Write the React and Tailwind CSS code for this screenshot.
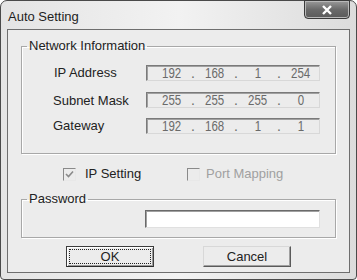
const font = { fontFamily: '"Liberation Sans", Arial, sans-serif' };

const Octet = ({ v }) => (
  <span className="w-[37px] flex justify-center">
    <span className="inline-block scale-x-[0.82]">{v}</span>
  </span>
);

const Dot = () => <span className="w-[6px] text-center">.</span>;

const IpField = ({ parts }) => (
  <div className="flex items-center w-[174px] h-[16px] pl-[6px] bg-[#ececec] border border-t-[#7a7a7a] border-l-[#7a7a7a] border-b-[#d8d8d8] border-r-[#d8d8d8] shadow-[inset_1px_1px_0_#a0a0a0] text-[14px] text-[#6a6a6a] leading-none">
    <Octet v={parts[0]} />
    <Dot />
    <Octet v={parts[1]} />
    <Dot />
    <Octet v={parts[2]} />
    <Dot />
    <Octet v={parts[3]} />
  </div>
);

const Checkbox = ({ checked, disabled, label, gap }) => (
  <label className={`flex items-center ${gap}`}>
    <span className="w-[13px] h-[13px] border border-t-[#8a8a8a] border-l-[#8a8a8a] border-b-[#e8e8e8] border-r-[#e8e8e8] bg-[#ececec] flex items-center justify-center">
      {checked && (
        <svg width="9" height="9" viewBox="0 0 9 9">
          <path d="M1 4 L3.5 6.5 L8 1.5" stroke="#8a8a8a" strokeWidth="1.6" fill="none" />
        </svg>
      )}
    </span>
    <span className={`text-[13px] ${disabled ? "text-[#a0a0a0]" : "text-[#222]"}`}>{label}</span>
  </label>
);

export default function App() {
  return (
    <div className="w-[357px] h-[280px] bg-white" style={font}>
      <div className="w-[357px] h-[280px] rounded-t-[7px] rounded-b-[4px] border border-[#4a4a4a] bg-gradient-to-r from-[#e4e4e4] via-[#f2f2f2] to-[#dcdcdc] flex flex-col">
        {/* Title bar */}
        <div className="h-[28px] flex justify-between pl-[7px] pr-[6px]">
          <span className="mt-[6px] text-[13px] text-[#1e1e1e]">Auto Setting</span>
          <button className="w-[46px] h-[19px] -mt-px rounded-b-[4px] border border-[#3a3a3a] bg-gradient-to-b from-[#9a9a9a] via-[#6a6a6a] to-[#5a5a5a] flex items-center justify-center shadow-[inset_0_0_0_1px_#b8b8b8]">
            <svg width="12" height="10" viewBox="0 0 12 10">
              <path d="M2 1 L10 9 M10 1 L2 9" stroke="#fff" strokeWidth="2.4" />
            </svg>
          </button>
        </div>

        {/* Client area */}
        <div className="mx-[6px] h-[244px] border border-[#6e6e6e] bg-[#ececec] px-[13px] pt-[9px]">
          <fieldset className="h-[115px] border border-[#a8a8a8] shadow-[inset_1px_1px_0_#fff,1px_1px_0_#fff]">
            <legend className="ml-[5px] px-[2px] text-[13px] text-[#222] leading-[14px]">Network Information</legend>
            <div className="pl-[31px] pr-[15px]">
              <div className="mt-[10px] flex items-center justify-between">
                <span className="text-[13px] text-[#222] ml-[1px]">IP Address</span>
                <IpField parts={["192", "168", "1", "254"]} />
              </div>
              <div className="mt-[8px] flex items-center justify-between">
                <span className="text-[13px] text-[#222]">Subnet Mask</span>
                <IpField parts={["255", "255", "255", "0"]} />
              </div>
              <div className="mt-[6px] flex items-center justify-between">
                <span className="text-[13px] text-[#222]">Gateway</span>
                <IpField parts={["192", "168", "1", "1"]} />
              </div>
            </div>
          </fieldset>

          <div className="mt-[12px] h-[16px] flex items-center pl-[42px]">
            <div className="w-[124px]">
              <Checkbox checked label="IP Setting" gap="gap-[9px]" />
            </div>
            <Checkbox disabled label="Port Mapping" gap="gap-[6px]" />
          </div>

          <fieldset className="mt-[10px] h-[46px] border border-[#a8a8a8] shadow-[inset_1px_1px_0_#fff,1px_1px_0_#fff] flex justify-end pr-[15px]">
            <legend className="ml-[5px] px-[2px] text-[13px] text-[#222] leading-[14px]">Password</legend>
            <div className="mt-[4px] ml-auto w-[175px] h-[18px] bg-white border border-t-[#6a6a6a] border-l-[#6a6a6a] border-b-[#e0e0e0] border-r-[#e0e0e0] shadow-[inset_1px_1px_0_#a0a0a0]" />
          </fieldset>

          <div className="mt-[8px] flex justify-center gap-[49px]">
            <button className="w-[88px] h-[21px] border border-[#3c3c3c] border-b-[#2a2a2a] bg-[#ececec] shadow-[inset_1px_1px_0_#fff,inset_-1px_-1px_0_#9a9a9a] p-[2px]">
              <span className="flex items-center justify-center w-full h-full border border-dotted border-[#222] text-[13px] text-[#222] leading-none">
                OK
              </span>
            </button>
            <button className="w-[88px] h-[21px] border border-[#d8d8d8] border-r-[#5a5a5a] border-b-[#5a5a5a] bg-[#ececec] shadow-[inset_-1px_-1px_0_#a0a0a0] text-[13px] text-[#222] leading-none">
              Cancel
            </button>
          </div>
        </div>
      </div>
    </div>
  );
}
